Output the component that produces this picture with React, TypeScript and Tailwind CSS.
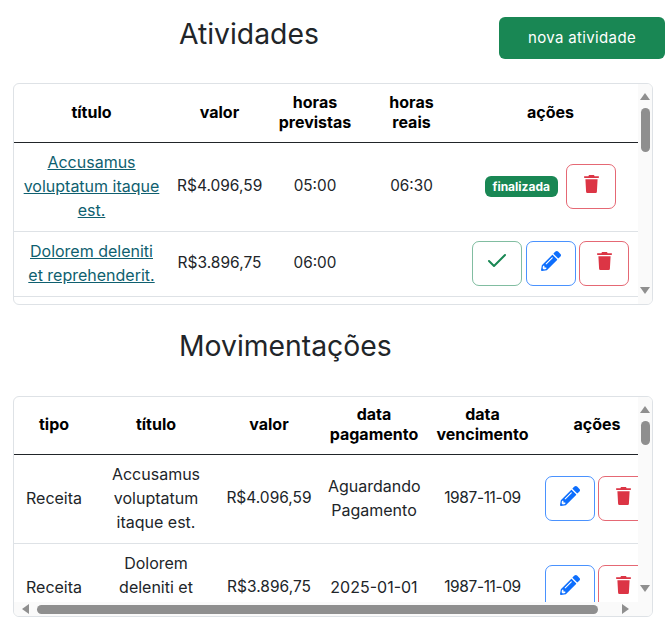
import { FaPencilAlt } from "react-icons/fa";
import { Check } from "lucide-react";

const atividades = [
  { titulo: "Accusamus voluptatum itaque est.", valor: "R$4.096,59", previstas: "05:00", reais: "06:30", finalizada: true },
  { titulo: "Dolorem deleniti et reprehenderit.", valor: "R$3.896,75", previstas: "06:00", reais: "", finalizada: false },
];

const movimentacoes = [
  { tipo: "Receita", titulo: "Accusamus voluptatum itaque est.", valor: "R$4.096,59", pagamento: "Aguardando Pagamento", vencimento: "1987-11-09" },
  { tipo: "Receita", titulo: "Dolorem deleniti et reprehenderit.", valor: "R$3.896,75", pagamento: "2025-01-01", vencimento: "1987-11-09" },
];

const thClass = "px-2 pt-[7px] pb-[9px] text-center align-middle font-bold leading-5";
const tdClass = "px-2 pt-[7px] pb-[9px] text-center align-middle font-normal leading-6 text-[#212529]";
const acoesClass = "px-2 py-2 align-middle";
const btnClass = "flex h-[45px] w-[50px] shrink-0 items-center justify-center rounded-[7px] border pb-[6px]";

function EditButton() {
  return (
    <button className={`${btnClass} border-[#0d6efd]/75 text-[#0d6efd]`}>
      <FaPencilAlt size={20} />
    </button>
  );
}

function TrashIcon() {
  return (
    <svg width="15" height="18" viewBox="0 0 15 18" fill="currentColor">
      <path d="M5 0h5l.6 1.2H14.2a.8.8 0 0 1 0 1.8H.8a.8.8 0 0 1 0-1.8H4.4z" />
      <path d="M1.4 4.2h12.2l-.7 12.5a1.3 1.3 0 0 1-1.3 1.3H3.4a1.3 1.3 0 0 1-1.3-1.3z" />
    </svg>
  );
}

function DeleteButton() {
  return (
    <button className={`${btnClass} border-[#dc3545]/75 text-[#dc3545]`}>
      <TrashIcon />
    </button>
  );
}

function CheckButton() {
  return (
    <button className={`${btnClass} border-[#198754]/55 text-[#198754]`}>
      <Check size={24} strokeWidth={2} />
    </button>
  );
}

function Arrow({ dir }: { dir: "up" | "down" | "left" | "right" }) {
  const points = {
    up: "5,1 10,8 0,8",
    down: "0,1 10,1 5,8",
    left: "8,0 8,10 1,5",
    right: "1,0 1,10 8,5",
  }[dir];
  return (
    <svg width="10" height="10" viewBox="0 0 10 10" className="shrink-0">
      <polygon points={points} fill="#8f8f8f" />
    </svg>
  );
}

function VerticalBar({ thumb }: { thumb: string }) {
  return (
    <div className="flex w-[14px] shrink-0 flex-col items-center bg-[#fafafa] py-[8px]">
      <Arrow dir="up" />
      <div className={`mt-[6px] w-[9px] rounded-full bg-[#8f8f8f] ${thumb}`} />
      <div className="flex-1" />
      <Arrow dir="down" />
    </div>
  );
}

function Heading({ children }: { children: string }) {
  return <h2 className="text-[28.3px] leading-[34px] font-normal text-[#212529]">{children}</h2>;
}

export default function App() {
  return (
    <div className="min-h-[639px] bg-white text-[#212529] [font-family:'Inter','Liberation_Sans',sans-serif]">
      <div className="flex items-start justify-between pt-[17px] pr-[5px] pl-[179px]">
        <Heading>Atividades</Heading>
        <button className="h-[42px] w-[166px] rounded-md bg-[#198754] text-[15px] tracking-[0.35px] text-white">
          nova atividade
        </button>
      </div>

      {/* Tabela de atividades */}
      <div className="mx-[13px] mt-[24px] flex h-[222px] w-[640px] overflow-hidden rounded-md border border-[#dee2e6]">
        <div className="min-w-0 flex-1 overflow-hidden">
          <table className="w-[624px] table-fixed border-collapse text-base text-black">
            <thead>
              <tr className="h-[58px] border-b-[1.5px] border-[#212529]">
                <th className={`${thClass} w-[155px]`}>título</th>
                <th className={`${thClass} w-[101px]`}>valor</th>
                <th className={`${thClass} w-[90px]`}>horas previstas</th>
                <th className={`${thClass} w-[103px]`}>
                  horas
                  <br />
                  reais
                </th>
                <th className={`${thClass} w-[175px]`}>ações</th>
              </tr>
            </thead>
            <tbody>
              {atividades.map((a) => (
                <tr key={a.titulo} className="border-b border-[#dee2e6]">
                  <td className={tdClass}>
                    <a href="#" className="text-[#0f5f6f] underline">
                      {a.titulo}
                    </a>
                  </td>
                  <td className={`${tdClass} px-0 text-[15.5px]`}>{a.valor}</td>
                  <td className={`${tdClass} text-[15.3px]`}>{a.previstas}</td>
                  <td className={`${tdClass} text-[15.3px]`}>{a.reais}</td>
                  <td className={acoesClass}>
                    <div className="flex items-center justify-center gap-[3.5px]">
                      {a.finalizada ? (
                        <>
                          <span className="mr-[5px] rounded-md bg-[#198754] px-2 py-[3px] text-xs leading-[15px] font-bold text-white">
                            finalizada
                          </span>
                          <DeleteButton />
                        </>
                      ) : (
                        <>
                          <CheckButton />
                          <EditButton />
                          <DeleteButton />
                        </>
                      )}
                    </div>
                  </td>
                </tr>
              ))}
            </tbody>
          </table>
        </div>
        <VerticalBar thumb="h-[44px]" />
      </div>

      <div className="pt-[24px] pl-[179px]">
        <Heading>Movimentações</Heading>
      </div>

      {/* Tabela de movimentações */}
      <div className="mx-[13px] mt-[33px] flex h-[221px] w-[640px] flex-col overflow-hidden rounded-md border border-[#dee2e6]">
        <div className="flex min-h-0 flex-1">
          <div className="min-w-0 flex-1 overflow-hidden">
            <table className="w-[643px] table-fixed border-collapse text-base text-black">
              <thead>
                <tr className="h-[57px] border-b-[1.5px] border-[#212529]">
                  <th className={`${thClass} w-[80px]`}>tipo</th>
                  <th className={`${thClass} w-[124px]`}>título</th>
                  <th className={`${thClass} w-[102px]`}>valor</th>
                  <th className={`${thClass} w-[108px]`}>data pagamento</th>
                  <th className={`${thClass} w-[109px]`}>data vencimento</th>
                  <th className={`${thClass} w-[120px]`}>ações</th>
                </tr>
              </thead>
              <tbody>
                {movimentacoes.map((m) => (
                  <tr key={m.titulo} className="border-b border-[#dee2e6]">
                    <td className={tdClass}>{m.tipo}</td>
                    <td className={tdClass}>{m.titulo}</td>
                    <td className={`${tdClass} px-0 text-[15.5px]`}>{m.valor}</td>
                    <td className={`${tdClass} px-1`}>{m.pagamento}</td>
                    <td className={`${tdClass} text-[15.5px] tracking-[-0.4px]`}>{m.vencimento}</td>
                    <td className={acoesClass}>
                      <div className="flex items-center gap-[3px]">
                        <EditButton />
                        <DeleteButton />
                      </div>
                    </td>
                  </tr>
                ))}
              </tbody>
            </table>
          </div>
          <VerticalBar thumb="h-[24px]" />
        </div>
        <div className="flex h-[14px] shrink-0 items-center bg-[#fafafa] pr-[21px] pl-[7px]">
          <Arrow dir="left" />
          <div className="ml-[6px] h-[9px] w-[561px] rounded-full bg-[#8f8f8f]" />
          <div className="flex-1" />
          <Arrow dir="right" />
        </div>
      </div>
    </div>
  );
}
